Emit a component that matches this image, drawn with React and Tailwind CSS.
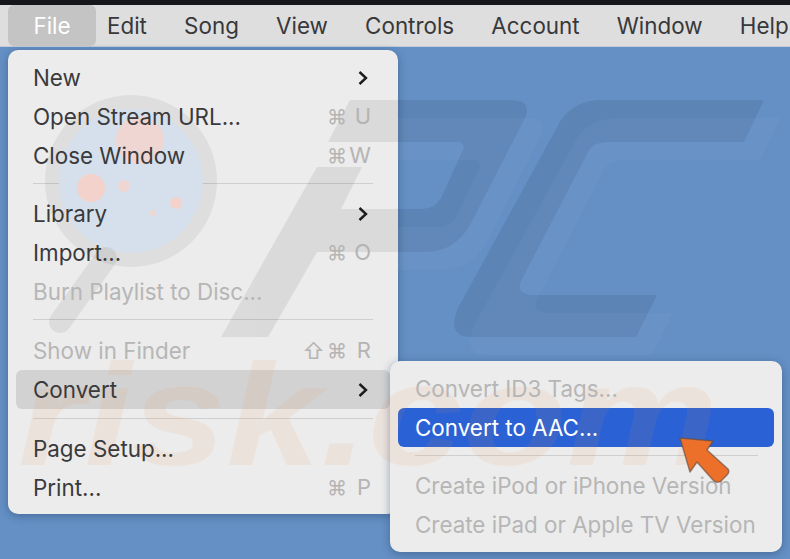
const FONT = "font-['Inter','Liberation_Sans',sans-serif]";

const menuBar = ["Edit", "Song", "View", "Controls", "Account", "Window", "Help"];

function Chevron() {
    return (
        <svg className="relative z-10" width="12" height="16" viewBox="0 0 12 16" fill="none">
            <path d="M2.5 2 L9 8 L2.5 14" stroke="#1c1c1e" strokeWidth="2.4" />
        </svg>
    );
}

function Shortcut({ keyName, shift }) {
    return (
        <span className="relative z-10 -mr-[2px] flex items-center text-[22px] text-[#b4b4b4]">
            {shift && <span className="mr-[2px] text-[22px] leading-none">⇧</span>}
            <span className="text-[20px] leading-none">⌘</span>
            <span className="w-[24px] text-right">{keyName}</span>
        </span>
    );
}

function Row({ label, disabled, active, selected, arrow, keyName, shift }) {
    let color = "text-[#3a3a3c] ";
    if (disabled) color = "text-[#b6b6b6] ";
    if (selected) color = "bg-[#2a62d6] text-white ";
    return (
        <div
            className={
                "flex h-[39px] items-center justify-between whitespace-nowrap rounded-[6px] pl-[17px] pr-[21px] text-[22.4px] " +
                color +
                (active ? "bg-[#d2d2d2]" : "")
            }
        >
            <span className="relative z-10">{label}</span>
            {arrow && <Chevron />}
            {keyName && <Shortcut keyName={keyName} shift={shift} />}
        </div>
    );
}

function Divider({ className }) {
    return <div className={"h-px bg-[#cfcfcf] " + className} />;
}

const P_PATH =
    "M350 100 H510 Q531 100 526 116 L471 223 Q456 252 424 252 H317 L268 337 H221 L317 167 H362 L341 209 H422 Q434 209 441 198 L463 150 Q466 142 456 142 H328 Z";
const C_PATH =
    "M764 100 H602 Q575 100 561 120 L458 308 Q446 337 472 337 H636 L657 295 H530 Q516 293 521 281 L587 154 Q592 142 608 142 H744 Z";

function Watermark() {
    return (
        <svg
            className="pointer-events-none absolute left-0 top-0 z-[5]"
            width="790"
            height="559"
            viewBox="0 0 790 559"
        >
            <g fill="#fff" opacity="0.03">
                <path d={P_PATH} transform="translate(16 18)" />
                <path d={C_PATH} transform="translate(16 18)" />
            </g>
            <circle cx="131" cy="181" r="86" fill="#000" opacity="0.06" />
            <circle cx="131" cy="181" r="72" fill="#d6e0ec" />
            <circle cx="140" cy="140" r="24" fill="#efd6d2" />
            <circle cx="91" cy="188" r="14" fill="#f2d2cb" />
            <circle cx="124" cy="186" r="6" fill="#efd6d2" />
            <circle cx="176" cy="203" r="6" fill="#f2d2cb" />
            <circle cx="153" cy="213" r="3" fill="#efd6d2" />
            <path d="M106 258 L60 322" stroke="#000" strokeOpacity="0.065" strokeWidth="22" strokeLinecap="round" />
            <g fill="#000" opacity="0.07">
                <path d={P_PATH} />
                <path d={C_PATH} />
            </g>
            <text
                x="18"
                y="465"
                fill="#f08a4b"
                opacity="0.09"
                fontFamily="Liberation Sans"
                fontStyle="italic"
                fontWeight="700"
                fontSize="145"
                textLength="700"
                lengthAdjust="spacingAndGlyphs"
            >
                risk.com
            </text>
        </svg>
    );
}

function Cursor() {
    return (
        <svg className="absolute left-[676px] top-[432px] z-20" width="58" height="56" viewBox="0 0 58 56">
            <path
                d="M4 6 L37 9 L31 18 L52 37 Q54 40 51 43 L45 49 Q41 52 37 48 L21 30 L14 40 Z"
                fill="#ec7029"
                stroke="#5a4a40"
                strokeOpacity="0.6"
                strokeWidth="1.5"
                strokeLinejoin="round"
            />
        </svg>
    );
}

export default function App() {
    return (
        <div className={"relative h-[559px] w-[790px] overflow-hidden bg-[#6490c5] " + FONT}>
            <div className="h-[5px] bg-[#16171d]" />
            <div className="flex h-[42px] items-center border-b border-[#c3ccd6] bg-[#dedede] pl-[8px] text-[22.4px] text-[#38383a]">
                <div className="mr-[11px] flex h-[41px] w-[88px] items-center justify-center rounded-[6px] bg-[#c4c4c4] text-white">
                    File
                </div>
                <div className="flex gap-[37.2px]">
                    {menuBar.map((name) => (
                        <div key={name}>{name}</div>
                    ))}
                </div>
            </div>

            <div className="ml-[8px] mt-[3px] flex h-[464px] w-[390px] flex-col rounded-[10px] bg-[#ececec] px-[8px] pt-[8px] shadow-[0_2px_8px_rgba(40,60,100,0.45)]">
                <Row label="New" arrow />
                <Row label="Open Stream URL..." keyName="U" />
                <Row label="Close Window" keyName="W" />
                <Divider className="mb-[10px] ml-[17px] mr-[17px] mt-[8px]" />
                <Row label="Library" arrow />
                <Row label="Import..." keyName="O" />
                <Row label="Burn Playlist to Disc..." disabled />
                <Divider className="mb-[11px] ml-[17px] mr-[17px] mt-[8px]" />
                <Row label="Show in Finder" disabled keyName="R" shift />
                <Row label="Convert" active arrow />
                <Divider className="mb-[10px] ml-[17px] mr-[17px] mt-[9px]" />
                <Row label="Page Setup..." />
                <Row label="Print..." keyName="P" />
            </div>

            <div className="absolute left-[390px] top-[361px] flex h-[191px] w-[392px] flex-col rounded-[10px] bg-[#ececec] px-[8px] pt-[8px] shadow-[0_2px_8px_rgba(40,60,100,0.45)]">
                <Row label="Convert ID3 Tags..." disabled />
                <Row label="Convert to AAC..." selected />
                <Divider className="mb-[10px] ml-[17px] mr-[16px] mt-[8px]" />
                <Row label="Create iPod or iPhone Version" disabled />
                <Row label="Create iPad or Apple TV Version" disabled />
            </div>

            <Watermark />
            <Cursor />
        </div>
    );
}
